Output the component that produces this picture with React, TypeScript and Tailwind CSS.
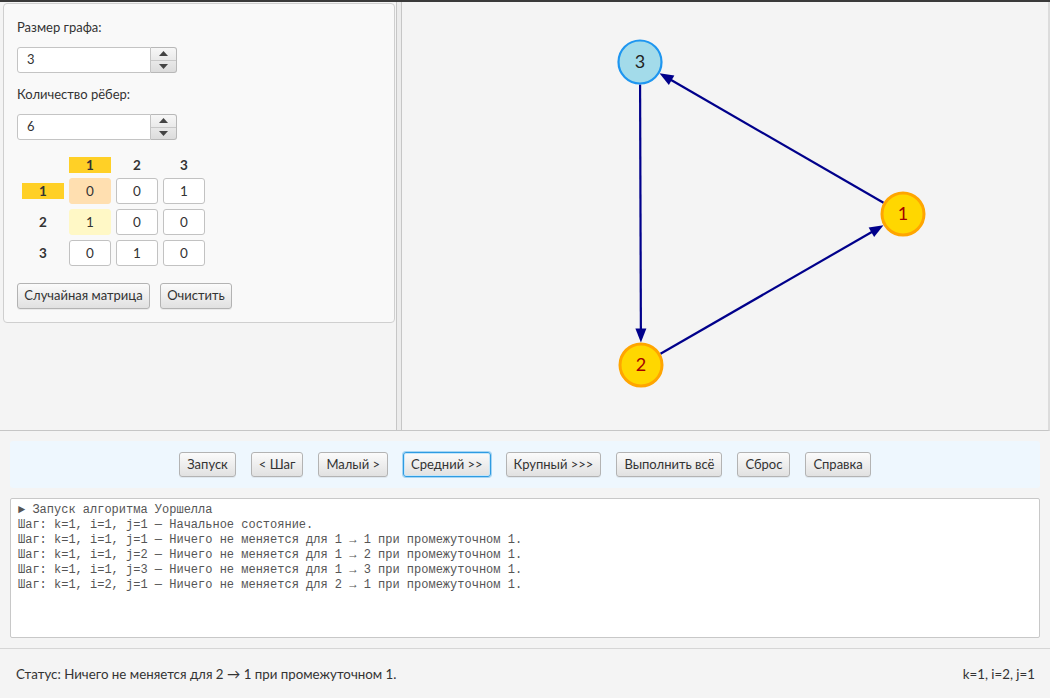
import React from 'react';

const FONT = "font-['Lato','Liberation_Sans',sans-serif]";

const btnBase =
    'h-[25px] px-[7px] flex items-center justify-center whitespace-nowrap rounded-[3px] border bg-linear-to-b from-[#fbfbfb] to-[#e1e1e1] text-[13px] text-[#333]';
const btn = `${btnBase} border-[#b3b3b3] shadow-[0_1px_0_rgba(0,0,0,0.06)]`;
const btnFocused = `${btnBase} border-[#2e9be2] shadow-[inset_0_0_0_1px_#c4e6fa,0_0_0_1px_#a6d5f3]`;

const Spinner: React.FC<{ value: string }> = ({ value }) => (
    <div className="flex h-[26px] w-[160px]">
        <div className="flex-1 flex items-center pl-[9px] bg-white border border-[#c4c4c4] rounded-l-[3px] text-[13px] text-[#333]">
            {value}
        </div>
        <div className="w-[26px] flex flex-col border border-l-0 border-[#b8b8b8] rounded-r-[3px] bg-linear-to-b from-[#f7f7f7] to-[#dcdcdc]">
            <div className="flex-1 flex items-center justify-center border-b border-[#c8c8c8]">
                <svg width="9" height="5" viewBox="0 0 9 5"><path d="M0 5 L4.5 0 L9 5 Z" fill="#444" /></svg>
            </div>
            <div className="flex-1 flex items-center justify-center">
                <svg width="9" height="5" viewBox="0 0 9 5"><path d="M0 0 L9 0 L4.5 5 Z" fill="#444" /></svg>
            </div>
        </div>
    </div>
);

const matrix = [
    [0, 0, 1],
    [1, 0, 0],
    [0, 1, 0],
];

const cellClass = (r: number, c: number) => {
    if (r === 0 && c === 0) return 'bg-[#ffdfb0] border-[#ffdfb0]';
    if (r === 1 && c === 0) return 'bg-[#fff8c6] border-[#fff8c6]';
    return 'bg-white border-[#c2c2c2]';
};

// координаты узлов на странице
const OX = 403;
const OY = 2;
const nodes = [
    { id: 1, x: 904, y: 214, fill: '#ffd700', stroke: '#ffa500', text: '#a40000' },
    { id: 2, x: 642, y: 365, fill: '#ffd700', stroke: '#ffa500', text: '#a40000' },
    { id: 3, x: 641, y: 62, fill: '#a3dbea', stroke: '#1e96f0', text: '#222' },
];
const edges: [number, number][] = [
    [1, 3],
    [3, 2],
    [2, 1],
];

const Graph: React.FC = () => {
    const R = 22.5;
    const get = (id: number) => nodes.find((n) => n.id === id)!;
    return (
        <svg width="645" height="428" className="block">
            {edges.map(([a, b]) => {
                const p = get(a);
                const q = get(b);
                const dx = q.x - p.x;
                const dy = q.y - p.y;
                const len = Math.hypot(dx, dy);
                const ux = dx / len;
                const uy = dy / len;
                const sx = p.x + ux * R - OX;
                const sy = p.y + uy * R - OY;
                const tx = q.x - ux * R - OX;
                const ty = q.y - uy * R - OY;
                const bx = tx - ux * 14;
                const by = ty - uy * 14;
                const px = -uy * 5.5;
                const py = ux * 5.5;
                return (
                    <g key={`${a}-${b}`}>
                        <line x1={sx} y1={sy} x2={bx + ux * 2} y2={by + uy * 2} stroke="#00008b" strokeWidth="2.2" />
                        <path d={`M${tx} ${ty} L${bx + px} ${by + py} L${bx - px} ${by - py} Z`} fill="#00008b" />
                    </g>
                );
            })}
            {nodes.map((n) => (
                <g key={n.id}>
                    <circle cx={n.x - OX} cy={n.y - OY} r={n.id === 3 ? 21.5 : 21} fill={n.fill} stroke={n.stroke} strokeWidth={n.id === 3 ? 2.2 : 3} />
                    <text
                        x={n.x - OX}
                        y={n.y - OY + 6}
                        textAnchor="middle"
                        fontSize="18"
                        fontFamily="Lato, 'Liberation Sans', sans-serif"
                        fill={n.text}
                    >
                        {n.id}
                    </text>
                </g>
            ))}
        </svg>
    );
};

const logLines = [
    '► Запуск алгоритма Уоршелла',
    'Шаг: k=1, i=1, j=1 — Начальное состояние.',
    'Шаг: k=1, i=1, j=1 — Ничего не меняется для 1 → 1 при промежуточном 1.',
    'Шаг: k=1, i=1, j=2 — Ничего не меняется для 1 → 2 при промежуточном 1.',
    'Шаг: k=1, i=1, j=3 — Ничего не меняется для 1 → 3 при промежуточном 1.',
    'Шаг: k=1, i=2, j=1 — Ничего не меняется для 2 → 1 при промежуточном 1.',
];

const controls = ['Запуск', '< Шаг', 'Малый >', 'Средний >>', 'Крупный >>>', 'Выполнить всё', 'Сброс', 'Справка'];

export default function App() {
    return (
        <div className={`w-[1050px] h-[698px] flex flex-col bg-[#f4f4f4] overflow-hidden border-t-2 border-[#3a3a3a] ${FONT}`}>
            {/* верхняя разделённая панель */}
            <div className="h-[429px] flex border-b border-[#c6c6c6] border-r-2 border-r-[#dcdcdc]">
                <div className="w-[397px] border-r border-[#c6c6c6] pl-[3px] pt-[1px]">
                    <div className="w-[392px] h-[320px] bg-[#f9f9f9] border border-[#cfcfcf] rounded-[4px] pl-[13px] pt-[15px]">
                        <div className="text-[13px] leading-[16px] text-[#333]">Размер графа:</div>
                        <div className="mt-[12px]">
                            <Spinner value="3" />
                        </div>
                        <div className="mt-[13px] text-[13px] leading-[16px] text-[#333]">Количество рёбер:</div>
                        <div className="mt-[12px]">
                            <Spinner value="6" />
                        </div>

                        {/* матрица смежности */}
                        <div className="mt-[17px] ml-[5px] grid grid-cols-[42px_42px_42px_42px] gap-x-[5px] gap-y-[5px]">
                            <div />
                            {[1, 2, 3].map((c) => (
                                <div
                                    key={c}
                                    className={`h-[16px] flex items-center justify-center text-[13.5px] font-bold text-[#333] ${c === 1 ? 'bg-[#ffd026]' : ''}`}
                                >
                                    {c}
                                </div>
                            ))}
                            {matrix.map((row, r) => (
                                <React.Fragment key={r}>
                                    <div className="h-[26px] flex items-center">
                                        <div className={`w-full h-[16px] flex items-center justify-center text-[13.5px] font-bold text-[#333] ${r === 0 ? 'bg-[#ffd026]' : ''}`}>
                                            {r + 1}
                                        </div>
                                    </div>
                                    {row.map((v, c) => (
                                        <div
                                            key={c}
                                            className={`h-[26px] flex items-center justify-center border rounded-[3px] text-[13.5px] text-[#333] ${cellClass(r, c)}`}
                                        >
                                            {v}
                                        </div>
                                    ))}
                                </React.Fragment>
                            ))}
                        </div>

                        <div className="mt-[17px] flex gap-[10px]">
                            <button className={`${btn} w-[133px] h-[26px] text-[13.5px]`}>Случайная матрица</button>
                            <button className={`${btn} w-[72px] h-[26px] text-[13.5px]`}>Очистить</button>
                        </div>
                    </div>
                </div>
                <div className="w-[5px] bg-[#ececec] border-r border-[#c6c6c6]" />
                <div className="flex-1 relative">
                    <Graph />
                </div>
            </div>

            {/* панель управления */}
            <div className="mx-[10px] mt-[10px] h-[47px] bg-[#eef7fe] rounded-[3px] flex items-center justify-center gap-[15px]">
                {controls.map((c) => (
                    <button key={c} className={c === 'Средний >>' ? btnFocused : btn}>
                        {c}
                    </button>
                ))}
            </div>

            {/* журнал */}
            <div className="mx-[10px] mt-[10px] h-[140px] bg-white border border-[#c8c8c8] rounded-[2px] pl-[7px] pt-[4px] font-['Liberation_Mono',monospace] text-[12px] leading-[15px] text-[#555] whitespace-pre">
                {logLines.map((l, i) => (
                    <div key={i}>{l}</div>
                ))}
            </div>

            {/* строка состояния */}
            <div className="mt-[10px] flex-1 border-t border-[#d6d6d6] flex items-center justify-between pl-[16px] pr-[15px] pt-[2px] text-[13.3px] text-[#333]">
                <span>Статус: Ничего не меняется для 2 → 1 при промежуточном 1.</span>
                <span>k=1, i=2, j=1</span>
            </div>
        </div>
    );
}
